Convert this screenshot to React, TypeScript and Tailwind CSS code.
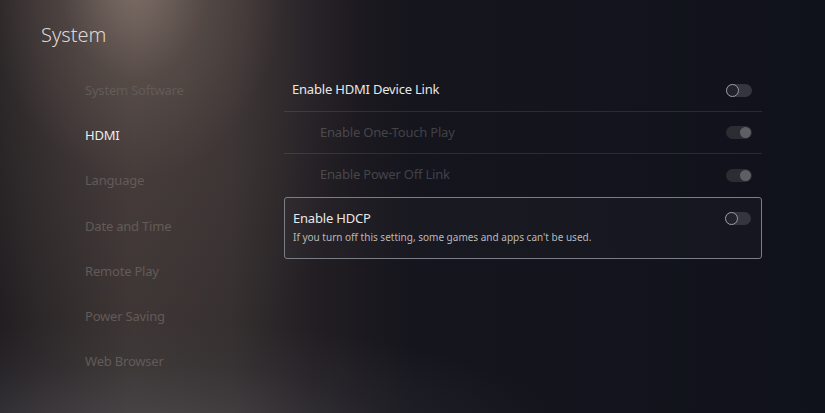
import React from 'react';

const menu = [
  'System Software',
  'HDMI',
  'Language',
  'Date and Time',
  'Remote Play',
  'Power Saving',
  'Web Browser',
];

const Toggle: React.FC<{ on?: boolean; dim?: boolean }> = ({ on, dim }) => (
  <div
    className={`relative w-[26px] h-[13px] rounded-full ${
      dim ? 'bg-[#2c2d33]' : 'bg-[#34363e]'
    }`}
  >
    {on ? (
      <span className="absolute right-[1px] top-[1px] w-[11px] h-[11px] rounded-full bg-[#5d5f66]" />
    ) : (
      <span className="absolute left-[0px] top-[0px] w-[13px] h-[13px] rounded-full border-[1.5px] border-[#9a9ca4] bg-[#22232a]" />
    )}
  </div>
);

const App: React.FC = () => {
  return (
    <div
      className="w-[825px] h-[413px] overflow-hidden flex text-[#e6e6e6] bg-[radial-gradient(ellipse_150px_200px_at_135px_-20px,rgba(170,150,138,0.55)_0%,rgba(120,104,96,0.28)_50%,transparent_100%),radial-gradient(ellipse_220px_360px_at_140px_40px,rgba(95,82,78,0.45)_0%,transparent_100%),radial-gradient(ellipse_420px_110px_at_140px_430px,rgba(88,88,94,0.55)_0%,rgba(70,70,76,0.2)_60%,transparent_100%),linear-gradient(to_right,#211e21_0%,#2a2527_5%,#3a3332_16%,#342e2e_28%,#221e23_38%,#15151d_50%,#10121b_100%)]"
      style={{ fontFamily: '"Noto Sans", "Open Sans", sans-serif' }}
    >
      {/* left column: page title + section list */}
      <div className="w-[284px] shrink-0 flex flex-col">
        <div className="pl-[41px] pt-[20px] text-[20px] leading-[30px] font-light text-[#dcd8d6]">System</div>
        <ul className="pl-[85px] pt-[26px] flex flex-col">
          {menu.map((m) => (
            <li
              key={m}
              className={`h-[45.2px] text-[13px] leading-[28px] tracking-[-0.2px] ${
                m === 'HDMI' ? 'text-[#ececec]' : 'text-[#625b58]'
              }`}
            >
              {m}
            </li>
          ))}
        </ul>
      </div>

      {/* right column: HDMI settings */}
      <div className="w-[478px] pt-[69px] flex flex-col tracking-[-0.2px]">
        <div className="h-[43px] pl-[8px] pr-[10px] flex items-center justify-between border-b border-white/10">
          <span className="text-[13px] text-[#e8e8e8]">Enable HDMI Device Link</span>
          <Toggle />
        </div>
        <div className="h-[42px] pl-[36px] pr-[10px] flex items-center justify-between border-b border-white/10">
          <span className="text-[13px] text-white/20">Enable One-Touch Play</span>
          <Toggle on dim />
        </div>
        <div className="h-[42px] pl-[36px] pr-[10px] flex items-center justify-between">
          <span className="text-[13px] text-white/20">Enable Power Off Link</span>
          <Toggle on dim />
        </div>
        <div className="mt-[1px] h-[62px] pl-[8px] pr-[10px] flex items-start justify-between border border-[#7a7c86] rounded-[3px] bg-white/[0.02]">
          <div className="pt-[11px] flex flex-col">
            <span className="text-[13px] leading-[18px] text-[#e8e8e8]">Enable HDCP</span>
            <span className="mt-[3px] text-[10px] leading-[14px] tracking-normal text-[#b8b8bc]">
              If you turn off this setting, some games and apps can't be used.
            </span>
          </div>
          <div className="pt-[14px]">
            <Toggle />
          </div>
        </div>
      </div>
    </div>
  );
};

export default App;
